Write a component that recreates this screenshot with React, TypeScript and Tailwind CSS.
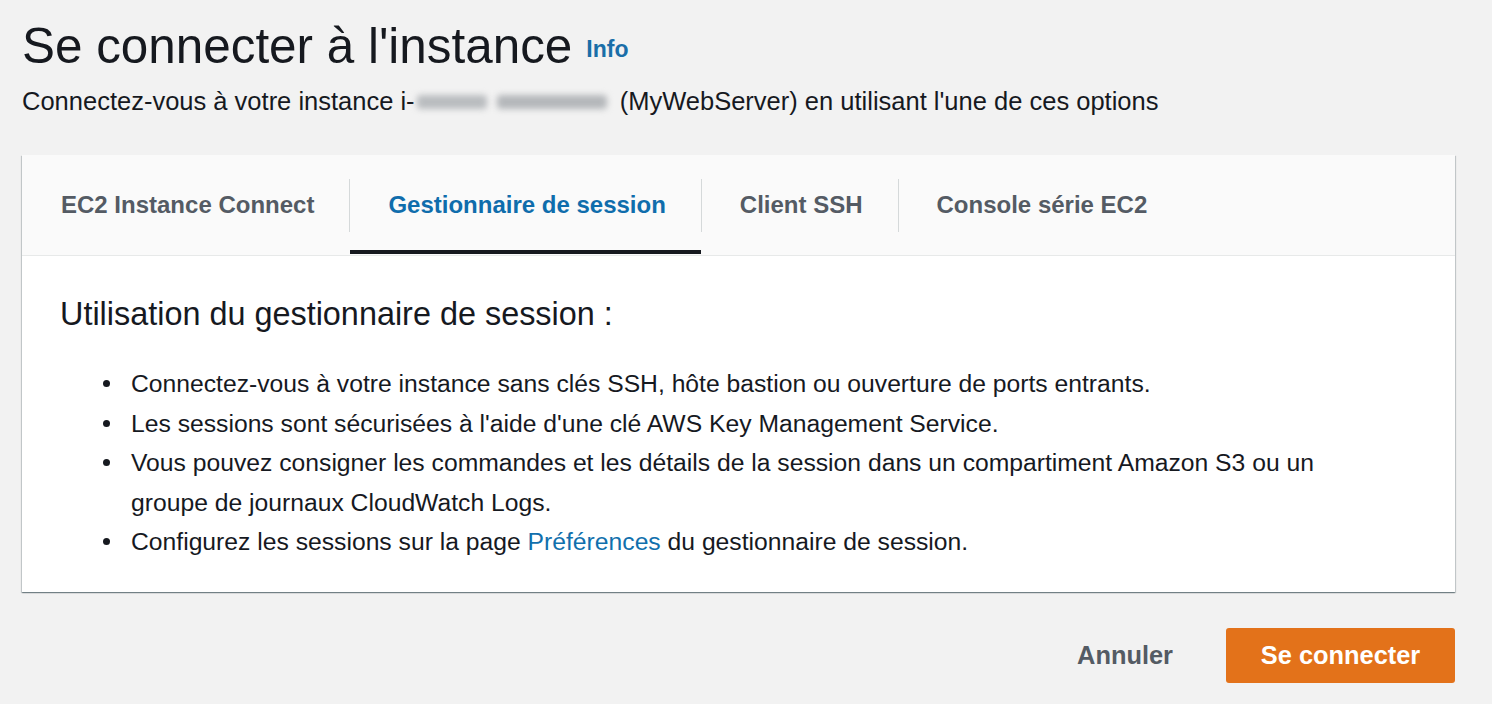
import { useState } from 'react';

const tabs = ['EC2 Instance Connect', 'Gestionnaire de session', 'Client SSH', 'Console série EC2'];

function Bullet({ children }: { children: React.ReactNode }) {
  return (
    <li className="flex">
      <span className="mt-[16px] ml-[43px] mr-[21px] h-[7px] w-[7px] shrink-0 rounded-full bg-[#16191f]" />
      <span>{children}</span>
    </li>
  );
}

export default function App() {
  const [active, setActive] = useState(1);

  return (
    <div
      className="min-h-screen w-full bg-[#f2f2f2] pl-[22px] pr-[37px] pt-[16px] text-[#16191f]"
      style={{ fontFamily: '"Liberation Sans", Arial, sans-serif' }}
    >
      {/* ─── Header ─── */}
      <div className="flex items-end">
        <h1 className="text-[49.4px] leading-[60px] font-normal">Se connecter à l'instance</h1>
        <a className="mb-[15px] ml-[14px] text-[23px] leading-[23px] font-bold text-[#1a6ea8]">Info</a>
      </div>
      <div className="mt-[10px] flex items-center text-[25.5px] leading-[31px]">
        <span>Connectez-vous à votre instance i-</span>
        {/* masked instance id */}
        <span className="mx-[2px] flex h-[20px] w-[194px] items-center gap-[10px] blur-[3px]">
          <span className="h-[14px] w-[70px] rounded-sm bg-[#b9bcbf]" />
          <span className="h-[14px] w-[110px] rounded-sm bg-[#b4b7ba]" />
        </span>
        <span>&nbsp;(MyWebServer) en utilisant l'une de ces options</span>
      </div>

      {/* ─── Card ─── */}
      <div className="mt-[38px] bg-white shadow-[0_1px_1px_0_rgba(0,28,36,0.35),1px_1px_1px_0_rgba(0,28,36,0.15),-1px_1px_1px_0_rgba(0,28,36,0.15)]">
        <div className="flex h-[101px] items-stretch border-b border-[#e7e9e9] bg-[#fafafa] pl-px">
          {tabs.map((t, i) => (
            <div key={t} className="flex items-stretch">
              {i > 0 && <div className="h-[53px] w-px self-center bg-[#d5d9da]" />}
              <button
                onClick={() => setActive(i)}
                className={`relative flex items-center pl-[38px] pr-[35px] text-[24px] font-bold ${
                  i === active ? 'text-[#0f6dac]' : 'text-[#545b64]'
                }`}
              >
                {t}
                {i === active && <span className="absolute inset-x-0 bottom-[1px] h-[4px] bg-[#16191f]" />}
              </button>
            </div>
          ))}
        </div>

        <div className="px-[38px] pt-[39px] pb-[30px]">
          <h2 className="text-[32.4px] leading-[39px] font-normal">Utilisation du gestionnaire de session :</h2>
          <ul className="mt-[30px] text-[24.7px] leading-[39.5px]">
            <Bullet>Connectez-vous à votre instance sans clés SSH, hôte bastion ou ouverture de ports entrants.</Bullet>
            <Bullet>Les sessions sont sécurisées à l'aide d'une clé AWS Key Management Service.</Bullet>
            <Bullet>
              Vous pouvez consigner les commandes et les détails de la session dans un compartiment Amazon S3 ou un
              <br />
              groupe de journaux CloudWatch Logs.
            </Bullet>
            <Bullet>
              Configurez les sessions sur la page <a className="text-[#1170ad]">Préférences</a> du gestionnaire de
              session.
            </Bullet>
          </ul>
        </div>
      </div>

      {/* ─── Actions ─── */}
      <div className="mt-[36px] flex items-center justify-end gap-[53px]">
        <button className="text-[25.4px] font-bold text-[#545b64]">Annuler</button>
        <button className="h-[55px] w-[229px] rounded-[3px] bg-[#e3721a] text-[25.4px] font-bold text-white">
          Se connecter
        </button>
      </div>
    </div>
  );
}
